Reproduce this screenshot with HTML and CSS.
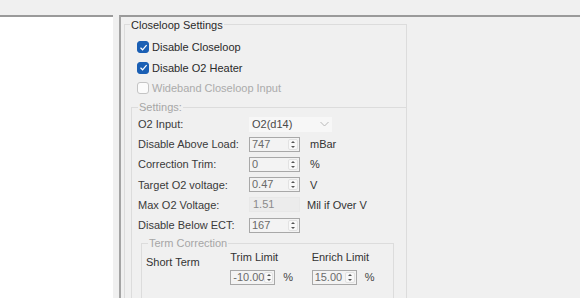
FILE: index.html
```html
<!DOCTYPE html>
<html>
<head>
<meta charset="utf-8">
<link rel="stylesheet" href="styles.css">
</head>
<body>
<div class="top"></div>
<div class="main">
  <div class="left"></div>
  <div class="right">
    <div class="group outer">
      <div class="legend title">Closeloop Settings</div>
      <div class="checks">
        <div class="check"><span class="box on"><svg width="9" height="9" viewBox="0 0 9 9"><path d="M1.5 4.8 L3.6 6.8 L7.6 2.2" fill="none" stroke="#fff" stroke-width="1.2"/></svg></span><span>Disable Closeloop</span></div>
        <div class="check"><span class="box on"><svg width="9" height="9" viewBox="0 0 9 9"><path d="M1.5 4.8 L3.6 6.8 L7.6 2.2" fill="none" stroke="#fff" stroke-width="1.2"/></svg></span><span>Disable O2 Heater</span></div>
        <div class="check disabled"><span class="box"></span><span>Wideband Closeloop Input</span></div>
      </div>
      <div class="group settings">
        <div class="legend">Settings:</div>
        <div class="form">
          <span class="lbl">O2 Input:</span>
          <div class="combo"><span>O2(d14)</span><svg width="9" height="6" viewBox="0 0 9 6"><path d="M0.5 1 L4.5 5 L8.5 1" fill="none" stroke="#b8b8b8" stroke-width="1"/></svg></div>
          <span class="unit"></span>

          <span class="lbl">Disable Above Load:</span>
          <div class="spin"><span class="val">747</span><span class="btns"><i class="up"></i><i class="dn"></i></span></div>
          <span class="unit">mBar</span>

          <span class="lbl">Correction Trim:</span>
          <div class="spin"><span class="val">0</span><span class="btns"><i class="up"></i><i class="dn"></i></span></div>
          <span class="unit">%</span>

          <span class="lbl">Target O2 voltage:</span>
          <div class="spin"><span class="val">0.47</span><span class="btns"><i class="up"></i><i class="dn"></i></span></div>
          <span class="unit">V</span>

          <span class="lbl">Max O2 Voltage:</span>
          <div class="ro">1.51</div>
          <span class="unit mil">Mil if Over V</span>

          <span class="lbl">Disable Below ECT:</span>
          <div class="spin"><span class="val">167</span><span class="btns"><i class="up"></i><i class="dn"></i></span></div>
          <span class="unit"></span>
        </div>
        <div class="group term">
          <div class="legend">Term Correction</div>
          <div class="term-row">
            <div class="st">Short Term</div>
            <div class="col trim">
              <div class="col-title">Trim Limit</div>
              <div class="col-ctl"><div class="spin small"><span class="val">-10.00</span><span class="btns"><i class="up"></i><i class="dn"></i></span></div><span class="pct">%</span></div>
            </div>
            <div class="col enrich">
              <div class="col-title">Enrich Limit</div>
              <div class="col-ctl"><div class="spin small"><span class="val">15.00</span><span class="btns"><i class="up"></i><i class="dn"></i></span></div><span class="pct">%</span></div>
            </div>
          </div>
        </div>
      </div>
    </div>
  </div>
</div>
</body>
</html>
```

FILE: styles.css
```css
* { box-sizing: border-box; }
html, body {
  margin: 0;
  padding: 0;
  width: 580px;
  height: 298px;
  overflow: hidden;
  background: #f0f0f0;
  font-family: "Liberation Sans", Arial, sans-serif;
  font-size: 11px;
  color: #3a3a3a;
}
.top { height: 15px; }
.main {
  display: flex;
  height: 283px;
  overflow: hidden;
}
.left {
  width: 113px;
  background: #fff;
  border-top: 2px solid #9a9a9a;
}
.right {
  flex: 1;
  margin-left: 6px;
  border-top: 2px solid #9a9a9a;
  border-left: 2px solid #a4a4a4;
  padding: 7px 0 0 3px;
  overflow: hidden;
}
.group {
  border: 1px solid #dcdcdc;
  border-bottom: none;
}
.outer {
  width: 283px;
  height: 274px;
}
.legend {
  width: fit-content;
  background: #f0f0f0;
  color: #a6a6a6;
  line-height: 13px;
  margin-top: -7px;
  padding: 0 1px;
}
.title {
  color: #2a2a2a;
  line-height: 15px;
  margin-left: 5px;
}
.checks {
  margin-top: 4px;
  padding-left: 12px;
}
.check {
  height: 20.5px;
  display: flex;
  align-items: center;
  gap: 3px;
  color: #2a2a2a;
}
.check.disabled { color: #ababab; }
.box {
  width: 12px;
  height: 12px;
  border-radius: 3px;
  border: 1px solid #c4c4c4;
  background: #fbfbfb;
  display: flex;
  align-items: center;
  justify-content: center;
}
.box.on {
  background: #1a5fb4;
  border-color: #1a5fb4;
}
.settings {
  margin: 8.5px -1px 0 6px;
  height: 191px;
}
.settings > .legend { margin-left: 6px; }
.form {
  display: grid;
  grid-template-columns: 111px 51px 1fr;
  grid-auto-rows: 20.2px;
  align-items: center;
  padding-left: 6px;
}
.lbl { color: #3a3a3a; }
.unit { padding-left: 10px; color: #333; }
.unit.mil { padding-left: 7px; }
.combo {
  width: 83px;
  height: 15px;
  background: #f7f7f7;
  display: flex;
  align-items: center;
  justify-content: space-between;
  padding: 0 3px 0 3px;
  color: #4a4a4a;
}
.spin {
  width: 51px;
  height: 15px;
  border: 1px solid #a8a8a8;
  background: #f3f3f3;
  display: flex;
  align-items: center;
  justify-content: space-between;
  padding: 0 1px 0 2px;
}
.spin.small { width: 45px; }
.val { color: #6a6a6a; line-height: 13px; }
.btns {
  width: 10px;
  height: 11px;
  display: flex;
  flex-direction: column;
  align-items: center;
  justify-content: space-between;
  padding: 1px 0;
  background: #f8f8f8;
  border: 1px solid #e2e2e2;
  border-radius: 2px;
}
.up, .dn {
  width: 0;
  height: 0;
  border-left: 2px solid transparent;
  border-right: 2px solid transparent;
}
.up { border-bottom: 2.5px solid #555; }
.dn { border-top: 2.5px solid #555; }
.ro {
  width: 51px;
  height: 15px;
  background: #ececec;
  border: 1px solid #e8e8e8;
  color: #8a8a8a;
  padding-left: 3px;
  line-height: 13px;
}
.term {
  margin: 7.6px 12px 0 9px;
  height: 55px;
}
.term > .legend { margin-left: 6px; }
.term-row {
  display: flex;
  padding-left: 4px;
}
.st {
  width: 87px;
  padding-top: 5px;
  line-height: 14px;
  color: #333;
}
.col { width: 84px; }
.col-title { line-height: 14px; color: #333; }
.col-ctl {
  display: flex;
  align-items: center;
  margin-top: 6px;
}
.pct { margin-left: 8px; color: #444; }
```
